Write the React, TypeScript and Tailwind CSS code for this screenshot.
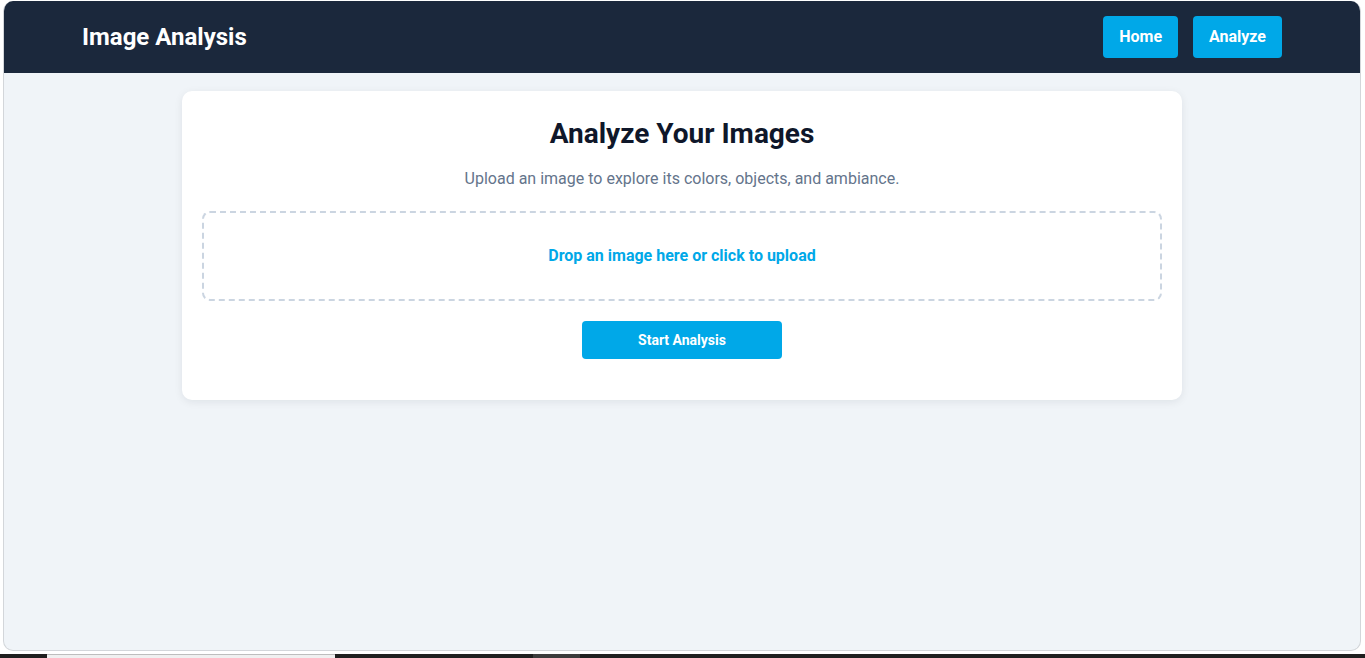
import React, { useState } from "react";

const App = () => {
  const [fileName, setFileName] = useState("");

  return (
    <div className="h-[658px] flex flex-col bg-white font-['Roboto','Liberation_Sans',sans-serif] overflow-hidden">
      {/* window frame */}
      <div className="ml-[3px] mr-[4px] mt-px h-[650px] flex flex-col border border-t-0 border-[#d3d6da] rounded-[10px] overflow-hidden bg-[#f0f4f8]">
        <header className="h-[72px] shrink-0 bg-[#1b283c]">
          <div className="max-w-[1200px] h-full mx-auto flex items-center justify-between">
            <h1 className="text-2xl font-bold text-white">Image Analysis</h1>
            <nav className="flex items-center gap-[15px]">
              <button className="h-[42px] px-4 rounded-[4px] bg-[#00a8e8] text-white text-base font-bold">
                Home
              </button>
              <button className="h-[42px] px-4 rounded-[4px] bg-[#00a8e8] text-white text-base font-bold">
                Analyze
              </button>
            </nav>
          </div>
        </header>

        <main className="flex justify-center">
          <div className="w-[1000px] mt-[18px] bg-white rounded-[10px] shadow-[0_2px_8px_rgba(15,23,42,0.08)] px-5 pt-[21px] pb-[41px] text-center">
            <h2 className="text-[28px] leading-[44px] font-bold text-[#0f172a]">
              Analyze Your Images
            </h2>
            <p className="mt-[11px] text-base leading-6 text-[#64748b]">
              Upload an image to explore its colors, objects, and ambiance.
            </p>
            <label className="mt-5 h-[90px] flex items-center justify-center border-2 border-dashed border-[#cbd5e1] rounded-[8px] cursor-pointer">
              <input
                type="file"
                accept="image/*"
                className="hidden"
                onChange={(e) => setFileName(e.target.files?.[0]?.name || "")}
              />
              <span className="text-base font-bold text-[#00a8e8]">
                {fileName || "Drop an image here or click to upload"}
              </span>
            </label>
            <button className="mt-5 w-[200px] h-[38px] rounded-[4px] bg-[#00a8e8] text-white text-sm font-bold">
              Start Analysis
            </button>
          </div>
        </main>
      </div>

      {/* bottom strip */}
      <div className="mt-[3px] h-[4px] flex bg-[#1f1f1f]">
        <div className="ml-[47px] w-[288px] bg-[#f0f0f0] border-t border-[#bdbdbd]" />
        <div className="ml-[198px] w-[47px] bg-[#3c3c3c]" />
      </div>
    </div>
  );
};

export default App;
